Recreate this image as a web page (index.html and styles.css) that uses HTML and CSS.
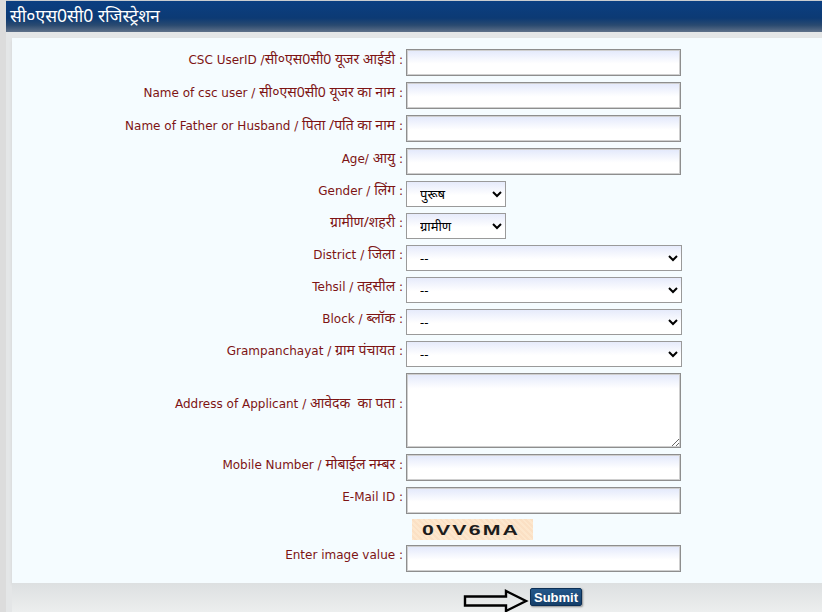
FILE: index.html
```html
<!DOCTYPE html>
<html lang="hi">
<head>
<meta charset="utf-8">
<title>CSC Registration</title>
<link rel="stylesheet" href="styles.css">
</head>
<body>
<div class="page">
  <div class="header">सी०एस0सी0 रजिस्ट्रेशन</div>
  <div class="band">
    <div class="card">
      <form class="form">
        <label class="lbl">CSC UserID /<span class="hi">सी०एस0सी0 यूजर आईडी</span> :</label>
        <div class="ctl"><input class="txt" type="text"></div>

        <label class="lbl">Name of csc user / <span class="hi">सी०एस0सी0 यूजर का नाम</span> :</label>
        <div class="ctl"><input class="txt" type="text"></div>

        <label class="lbl">Name of Father or Husband / <span class="hi">पिता /पति का नाम</span> :</label>
        <div class="ctl"><input class="txt" type="text"></div>

        <label class="lbl">Age/ <span class="hi">आयु</span> :</label>
        <div class="ctl"><input class="txt" type="text"></div>

        <label class="lbl">Gender / <span class="hi">लिंग</span> :</label>
        <div class="ctl"><select class="sel small"><option>पुरूष</option><option>महिला</option></select></div>

        <label class="lbl"><span class="hi">ग्रामीण/शहरी</span> :</label>
        <div class="ctl"><select class="sel small"><option>ग्रामीण</option><option>शहरी</option></select></div>

        <label class="lbl">District / <span class="hi">जिला</span> :</label>
        <div class="ctl"><select class="sel"><option>--</option></select></div>

        <label class="lbl">Tehsil / <span class="hi">तहसील</span> :</label>
        <div class="ctl"><select class="sel"><option>--</option></select></div>

        <label class="lbl">Block / <span class="hi">ब्लॉक</span> :</label>
        <div class="ctl"><select class="sel"><option>--</option></select></div>

        <label class="lbl">Grampanchayat / <span class="hi">ग्राम पंचायत</span> :</label>
        <div class="ctl"><select class="sel"><option>--</option></select></div>

        <label class="lbl lbl-tall">Address of Applicant / <span class="hi">आवेदक &nbsp;का पता</span> :</label>
        <div class="ctl"><textarea class="area"></textarea></div>

        <label class="lbl">Mobile Number / <span class="hi">मोबाईल नम्बर</span> :</label>
        <div class="ctl"><input class="txt" type="text"></div>

        <label class="lbl">E-Mail ID :</label>
        <div class="ctl"><input class="txt" type="text"></div>

        <span class="lbl"></span>
        <div class="ctl"><span class="captcha"><span class="captcha-text">0VV6MA</span></span></div>

        <label class="lbl">Enter image value :</label>
        <div class="ctl"><input class="txt" type="text"></div>
      </form>
    </div>
    <div class="footer">
      <svg class="arrow" width="66" height="24" viewBox="0 0 66 24">
        <path d="M2 7.5 H43 V2 L63 12 L43 22 V16.5 H2 Z" fill="none" stroke="#000" stroke-width="2.4" stroke-linejoin="miter"/>
      </svg>
      <button class="submit" type="button">Submit</button>
    </div>
  </div>
</div>
</body>
</html>
```

FILE: styles.css
```css
html, body {
  margin: 0;
  padding: 0;
}
body {
  background: #dcdcdc;
  font-family: "DejaVu Sans", "Noto Sans", sans-serif;
  width: 822px;
  height: 612px;
  overflow: hidden;
}
.page {
  margin-left: 6px;
  background: #e4e6e7;
  height: 612px;
}
.header {
  height: 32px;
  box-sizing: border-box;
  border-top: 1px solid #c9ccd0;
  background: linear-gradient(#0b3f82 0%, #0c3a74 55%, #2a4a70 78%, #5f7189 100%);
  color: #fff;
  font-family: "Noto Sans", "DejaVu Sans", sans-serif;
  font-size: 17.5px;
  line-height: 29px;
  padding-left: 4px;
  white-space: nowrap;
}
.band {
  padding: 6px 0 0 6px;
}
.card {
  background: #f5fcff;
  padding: 11px 0 11px 0;
  box-shadow: 0 2px 3px rgba(0,0,0,0.08);
}
.form {
  display: grid;
  grid-template-columns: 391px 1fr;
  column-gap: 3px;
  row-gap: 6px;
  align-items: center;
  margin: 0;
}
.lbl {
  text-align: right;
  color: #7d1414;
  font-size: 12px;
  line-height: 16px;
  white-space: nowrap;
  padding-bottom: 7px;
}
.lbl-tall {
  padding-bottom: 15px;
}
.hi {
  font-family: "Noto Sans", "DejaVu Sans", sans-serif;
  font-size: 14px;
}
.ctl {
  display: flex;
  align-items: center;
}
.txt {
  box-sizing: border-box;
  width: 275px;
  height: 27px;
  margin: 0;
  border: 1px solid #8e8e8e;
  box-shadow: 0 0 0 1px #cfcfcf inset;
  background: linear-gradient(#e2e8fb 0%, #ffffff 55%);
  font-size: 13px;
}
.sel {
  box-sizing: border-box;
  width: 276px;
  height: 26px;
  margin: 0;
  border: 1px solid #9a9a9a;
  border-radius: 0;
  background: linear-gradient(#e6ebfb 0%, #ffffff 55%);
  font-family: "Noto Sans", "DejaVu Sans", sans-serif;
  font-size: 13px;
  color: #000;
  padding-left: 9px;
}
.sel.small {
  width: 100px;
}
.area {
  box-sizing: border-box;
  width: 275px;
  height: 75px;
  margin: 0;
  border: 1px solid #8e8e8e;
  box-shadow: 0 0 0 1px #cfcfcf inset;
  background: linear-gradient(#e2e8fb 0%, #ffffff 20%);
}
.captcha {
  display: block;
  margin: -1px 0 -1px 6px;
  width: 121px;
  height: 21px;
  line-height: 21px;
  background: repeating-linear-gradient(45deg, #fde7cd 0 2px, #fbe0c4 2px 4px);
  box-sizing: border-box;
  padding-left: 10px;
  overflow: hidden;
}
.captcha-text {
  display: inline-block;
  font-family: "Liberation Sans", Arial, sans-serif;
  font-weight: bold;
  font-size: 15px;
  letter-spacing: 1.5px;
  color: #1c1c1c;
  transform: scaleX(1.42);
  transform-origin: left center;
}
.footer {
  height: 29px;
  background: linear-gradient(#dde0e1, #eceeee);
  display: flex;
  align-items: center;
  padding-left: 451px;
}
.arrow {
  display: block;
  margin-top: 6px;
  margin-right: 1px;
}
.submit {
  height: 18px;
  padding: 0 3px;
  border: 1px solid #0c2f55;
  border-radius: 2px;
  background: linear-gradient(#24578a, #153f6a);
  color: #fff;
  font-family: "Liberation Sans", Arial, sans-serif;
  font-size: 13px;
  font-weight: bold;
  line-height: 15px;
  box-shadow: 1px 1px 2px rgba(0,0,0,0.4);
  margin-top: -1px;
}
```
